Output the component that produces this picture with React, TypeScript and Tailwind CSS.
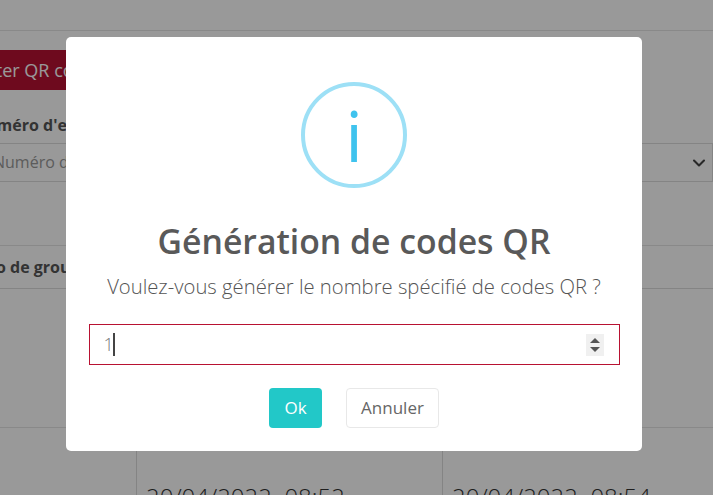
import React from 'react';
import { ChevronDown } from 'lucide-react';

const Background: React.FC = () => {
  return (
    <div className="w-[713px] h-[495px] overflow-hidden bg-white text-[#333]">
      <div className="h-[31px] border-b border-[#e5e5e5]" />

      {/* Bouton + formulaire, la page est décalée vers la gauche */}
      <div className="ml-[-64px]">
        <button className="mt-[19px] h-10 w-[240px] bg-[#b81232] text-white text-[18px] text-left pl-[22px]">
          Ajouter QR codes
        </button>
        <div className="mt-[23px] flex">
          <div className="w-[400px]">
            <div className="h-[30px] pl-[37px] text-[16px] font-bold leading-[24px] text-[#555]">Numéro d'exemplaires</div>
            <div className="h-[39px] border-y border-[#ddd] pl-[57px] text-[16px] leading-[37px] text-[#999]">Numéro de groupe</div>
          </div>
          <div className="ml-[36px] w-[341px] mt-[30px] h-[39px] border border-[#ddd] flex items-center justify-end pr-[3px]">
            <ChevronDown size={20} strokeWidth={2.5} className="text-[#444]" />
          </div>
        </div>
      </div>

      {/* Tableau */}
      <div className="mt-[63px] border-t border-[#e5e5e5]">
        <div className="h-[43px] border-b border-[#ddd] ml-[-60px] text-[16px] font-bold leading-[42px] text-[#555]">Numéro de groupe</div>
        <div className="h-[139px] border-b border-[#e5e5e5]" />
        <div className="grid grid-cols-[137px_306px_1fr] h-[68px]">
          <div className="border-r border-[#ddd]" />
          <div className="border-r border-[#ddd] pl-[9px] pt-[51px] text-[24px] font-light whitespace-pre">20/04/2022  08:52</div>
          <div className="pl-[9px] pt-[51px] text-[24px] font-light whitespace-pre">20/04/2022  08:54</div>
        </div>
      </div>
    </div>
  );
};

const Modal: React.FC = () => {
  return (
    <div className="fixed inset-0 bg-black/40">
      <div className="ml-[66px] mt-[37px] w-[576px] h-[414px] bg-white rounded-[5px] flex flex-col items-center">
        {/* Icone info */}
        <div className="mt-[45px] w-[106px] h-[106px] rounded-full border-[4px] border-[#9de0f6] flex items-center justify-center text-[#3fc3ee] text-[70px] font-normal leading-none">
          i
        </div>
        <h2 className="mt-[28px] text-[33.75px] leading-[50px] font-semibold text-[#595959]">Génération de codes QR</h2>
        <p className="mt-[7px] text-[20.25px] leading-[27px] font-light text-[#545454]">Voulez-vous générer le nombre spécifié de codes QR ?</p>

        <div className="mt-[24px] w-[531px] h-[41px] border border-[#b81232] flex items-center pl-[14px] pr-[15px]">
          <span className="text-[18px] font-light text-[#777]">1</span>
          <span className="ml-[-1px] w-[2px] h-[23px] bg-[#444]" />
          <div className="ml-auto w-[18px] h-[22px] bg-[#f0f0f0] flex flex-col items-center justify-center gap-[4px]">
            <svg width="10" height="5" viewBox="0 0 10 5"><path d="M5 0L10 5H0z" fill="#555" /></svg>
            <svg width="10" height="5" viewBox="0 0 10 5"><path d="M0 0h10L5 5z" fill="#555" /></svg>
          </div>
        </div>

        <div className="mt-[23px] flex gap-[24px]">
          <button className="w-[53px] h-10 rounded-[4px] bg-[#22c8c8] text-white text-[17px]">Ok</button>
          <button className="w-[93px] h-10 rounded-[4px] border border-[#e8e8e8] bg-white text-[#666] text-[17px]">Annuler</button>
        </div>
      </div>
    </div>
  );
};

export default function App() {
  return (
    <div className="font-['Open_Sans',sans-serif]">
      <Background />
      <Modal />
    </div>
  );
}
